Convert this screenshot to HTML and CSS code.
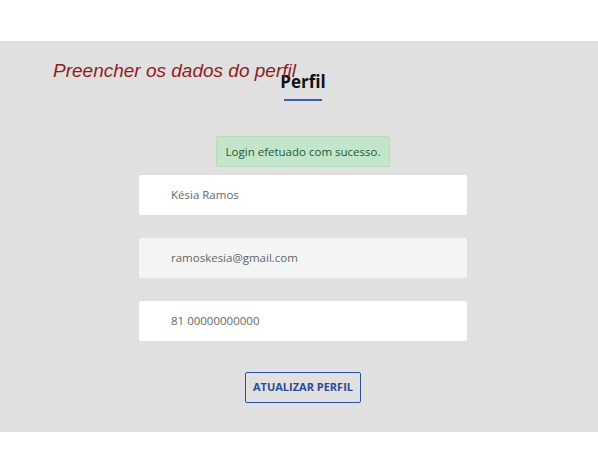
FILE: index.html
```html
<!DOCTYPE html>
<html lang="pt-BR">
<head>
<meta charset="utf-8">
<title>Perfil</title>
<link rel="stylesheet" href="styles.css">
</head>
<body>
<header class="topbar"></header>
<main class="panel">
  <p class="annotation">Preencher os dados do perfil</p>
  <div class="content">
    <h2 class="title">Perfil</h2>
    <div class="alert">Login efetuado com sucesso.</div>
    <form class="form">
      <div class="field">Késia Ramos</div>
      <div class="field field-muted">ramoskesia@gmail.com</div>
      <div class="field">81 00000000000</div>
      <button type="button" class="btn">ATUALIZAR PERFIL</button>
    </form>
  </div>
</main>
<footer class="bottom"></footer>
</body>
</html>
```

FILE: styles.css
```css
html, body {
  margin: 0;
  padding: 0;
  background: #ffffff;
}
body {
  font-family: "Open Sans", "DejaVu Sans", sans-serif;
  width: 598px;
  height: 453px;
  overflow: hidden;
}
.topbar {
  height: 41px;
  background: #ffffff;
}
.panel {
  position: relative;
  background: #e0e0e0;
  height: 391px;
  border-top: 1px solid #dadada;
  box-sizing: border-box;
}
.annotation {
  position: absolute;
  left: 53px;
  top: 17px;
  margin: 0;
  font-family: "Liberation Sans", Arial, sans-serif;
  font-style: italic;
  font-size: 19px;
  color: #921c1c;
  line-height: 24px;
}
.content {
  display: flex;
  flex-direction: column;
  align-items: center;
  padding-left: 8px;
  padding-top: 29px;
}
.title {
  margin: 0;
  font-size: 17px;
  font-weight: 700;
  line-height: 22px;
  color: #111;
  padding-bottom: 8px;
}
.title::after {
  content: "";
  display: block;
  width: 38px;
  height: 2px;
  background: #3a5fb0;
  margin: 6px auto 0;
}
.alert {
  margin-top: 27px;
  width: 174px;
  height: 31px;
  box-sizing: border-box;
  background: #c3e6cb;
  border: 1px solid #b5dcbe;
  border-radius: 2px;
  color: #1f5a2c;
  font-size: 11.5px;
  display: flex;
  align-items: center;
  justify-content: center;
}
.form {
  margin-top: 8px;
  display: flex;
  flex-direction: column;
  align-items: center;
  gap: 23px;
}
.field {
  width: 328px;
  height: 40px;
  box-sizing: border-box;
  background: #ffffff;
  border-radius: 2px;
  padding-left: 32px;
  padding-bottom: 2px;
  display: flex;
  align-items: center;
  font-size: 11.5px;
  color: #666;
}
.field-muted {
  background: #f4f4f4;
}
.btn {
  margin-top: 8px;
  width: 116px;
  height: 31px;
  background: transparent;
  border: 1px solid #2d50a0;
  border-radius: 2px;
  color: #294b98;
  font-family: "Open Sans", "DejaVu Sans", sans-serif;
  font-weight: 700;
  font-size: 11px;
  padding: 0 0 2px;
}
.bottom {
  height: 21px;
  background: #ffffff;
}
```
